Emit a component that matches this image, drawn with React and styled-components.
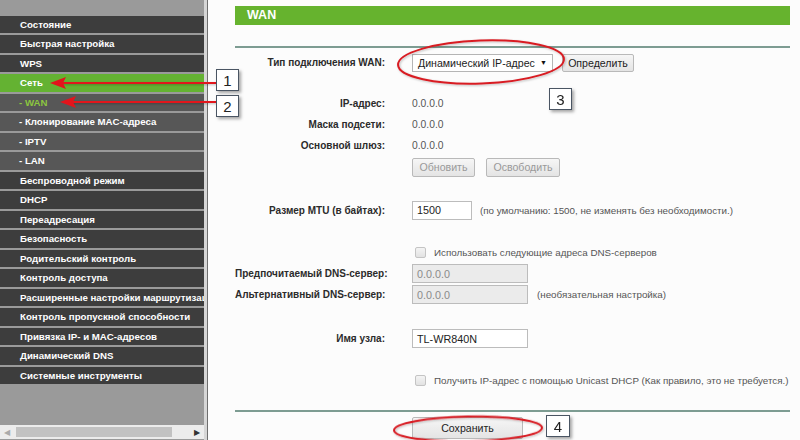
import React from "react";
import styled, { createGlobalStyle } from "styled-components";

const Global = createGlobalStyle`
  html, body { margin: 0; padding: 0; }
  body {
    width: 800px; height: 440px; overflow: hidden;
    font-family: "Liberation Sans", Arial, sans-serif;
    background: #fcfcfc;
  }
`;

const Page = styled.div`
  position: relative;
  display: flex;
  width: 800px;
  height: 440px;
  overflow: hidden;
`;

const Sidebar = styled.div`
  width: 204px;
  flex: none;
  background: #9a9a9a;
  display: flex;
  flex-direction: column;
`;

const Menu = styled.div`
  padding-top: 15.5px;
  display: flex;
  flex-direction: column;
  gap: 2px;
  flex: 1;
`;

const MenuItem = styled.div`
  height: 17.5px;
  line-height: 17.5px;
  padding-left: ${(p) => (p.$sub ? 19 : 20)}px;
  background: ${(p) => (p.$active ? "#64b232" : p.$sub ? "#575757" : "#3d3d3d")};
  color: ${(p) => (p.$current ? "#8cc63f" : "#ffffff")};
  font-size: 9.7px;
  font-weight: bold;
  white-space: nowrap;
  overflow: hidden;
`;

const HScroll = styled.div`
  height: 14px;
  margin-bottom: 1px;
  background: #ececec;
  display: flex;
  align-items: center;
  gap: 3px;
  padding: 0 3px;
  font-size: 8px;
  color: #555;
`;

const Thumb = styled.div`
  height: 10px;
  width: 156px;
  margin-left: 2px;
  background: #c2c2c2;
`;

const ScrollArrow = styled.span`
  width: 8px;
  text-align: center;
  margin-left: ${(p) => (p.$right ? "auto" : "0")};
  color: ${(p) => (p.$right ? "#333" : "#aaa")};
`;

const Divider = styled.div`
  width: 3px;
  flex: none;
  background: #d6d6d6;
  border-right: 1px solid #6e6e6e;
`;

const Content = styled.div`
  flex: 1;
  background: #fcfcfc;
  padding: 6px 10px 0 27px;
  display: flex;
  flex-direction: column;
`;

const Header = styled.div`
  height: 19px;
  background: #66b32e;
  color: #fff;
  font-weight: bold;
  font-size: 12.5px;
  line-height: 19px;
  padding-left: 12px;
`;

const Rule = styled.div`
  height: 2px;
  background: #7d9c92;
  margin-top: ${(p) => p.$mt}px;
`;

const Row = styled.div`
  display: grid;
  grid-template-columns: 150px 1fr;
  column-gap: 27px;
  align-items: center;
  height: ${(p) => p.$h}px;
  margin-top: ${(p) => p.$mt}px;
`;

const Label = styled.div`
  text-align: right;
  font-size: 10px;
  font-weight: bold;
  color: #2b2b2b;
  white-space: nowrap;
`;

const Cell = styled.div`
  display: flex;
  align-items: center;
  font-size: 10px;
  color: #555;
  white-space: nowrap;
`;

const Value = styled.span`
  font-size: 10.3px;
  color: #555;
`;

const Hint = styled.span`
  font-size: 9.8px;
  color: #555;
  margin-left: ${(p) => p.$ml}px;
`;

const Select = styled.div`
  box-sizing: border-box;
  width: 141px;
  height: 18px;
  border: 1px solid #b5b5b5;
  background: #fff;
  display: flex;
  align-items: center;
  justify-content: space-between;
  padding: 0 5px;
  font-size: 10.6px;
  color: #222;
`;

const Caret = styled.span`
  font-size: 7px;
  color: #111;
`;

const Button = styled.div`
  box-sizing: border-box;
  height: ${(p) => p.$h || 18}px;
  width: ${(p) => p.$w}px;
  margin-left: ${(p) => p.$ml || 0}px;
  border: 1px solid #b9b9b9;
  border-radius: 2px;
  background: linear-gradient(#f6f6f6, #e4e4e4);
  display: flex;
  align-items: center;
  justify-content: center;
  font-size: 10.6px;
  color: ${(p) => (p.$disabled ? "#9a9a9a" : "#222")};
`;

const Input = styled.div`
  box-sizing: border-box;
  width: ${(p) => p.$w}px;
  height: ${(p) => p.$h || 19}px;
  border: 1px solid #bcbcbc;
  background: ${(p) => (p.$disabled ? "#ebebeb" : "#fff")};
  color: ${(p) => (p.$disabled ? "#8a8a8a" : "#222")};
  font-size: 10.8px;
  display: flex;
  align-items: center;
  padding-left: 4px;
`;

const Check = styled.span`
  box-sizing: border-box;
  width: 11px;
  height: 11px;
  margin-left: 3px;
  border: 1px solid #c4c4c4;
  border-radius: 2px;
  background: linear-gradient(#f4f4f4, #e2e2e2);
  display: inline-block;
`;

const SaveRow = styled.div`
  margin-top: 5px;
  padding-left: 177px;
`;

const Overlay = styled.svg`
  position: absolute;
  left: 0;
  top: 0;
  pointer-events: none;
`;

const Badge = styled.div`
  position: absolute;
  left: ${(p) => p.$x}px;
  top: ${(p) => p.$y}px;
  width: ${(p) => p.$w || 23}px;
  height: 22px;
  box-sizing: border-box;
  background: #fff;
  border: 1px solid #4a5563;
  box-shadow: 2px 2px 3px rgba(0, 0, 0, 0.35);
  font-size: 15px;
  color: #222;
  display: flex;
  align-items: center;
  justify-content: center;
`;

const menu = [
  { t: "Состояние" },
  { t: "Быстрая настройка" },
  { t: "WPS" },
  { t: "Сеть", active: true },
  { t: "- WAN", sub: true, current: true },
  { t: "- Клонирование MAC-адреса", sub: true },
  { t: "- IPTV", sub: true },
  { t: "- LAN", sub: true },
  { t: "Беспроводной режим" },
  { t: "DHCP" },
  { t: "Переадресация" },
  { t: "Безопасность" },
  { t: "Родительский контроль" },
  { t: "Контроль доступа" },
  { t: "Расширенные настройки маршрутизации" },
  { t: "Контроль пропускной способности" },
  { t: "Привязка IP- и MAC-адресов" },
  { t: "Динамический DNS" },
  { t: "Системные инструменты" },
];

export default function App() {
  return (
    <>
      <Global />
      <Page>
        <Sidebar>
          <Menu>
            {menu.map((m) => (
              <MenuItem key={m.t} $active={m.active} $sub={m.sub} $current={m.current}>
                {m.t}
              </MenuItem>
            ))}
          </Menu>
          <HScroll>
            <ScrollArrow>◀</ScrollArrow>
            <Thumb />
            <ScrollArrow $right>▶</ScrollArrow>
          </HScroll>
        </Sidebar>
        <Divider />
        <Content>
          <Header>WAN</Header>
          <Rule $mt={21} />
          <Row $h={19} $mt={5}>
            <Label>Тип подключения WAN:</Label>
            <Cell>
              <Select>
                Динамический IP-адрес <Caret>▼</Caret>
              </Select>
              <Button $w={72} $ml={9}>Определить</Button>
            </Cell>
          </Row>
          <Row $h={21} $mt={21}>
            <Label>IP-адрес:</Label>
            <Cell><Value>0.0.0.0</Value></Cell>
          </Row>
          <Row $h={21} $mt={0}>
            <Label>Маска подсети:</Label>
            <Cell><Value>0.0.0.0</Value></Cell>
          </Row>
          <Row $h={21} $mt={0}>
            <Label>Основной шлюз:</Label>
            <Cell><Value>0.0.0.0</Value></Cell>
          </Row>
          <Row $h={20} $mt={1}>
            <Label />
            <Cell>
              <Button $w={63} $h={19} $disabled>Обновить</Button>
              <Button $w={74} $h={19} $ml={11} $disabled>Освободить</Button>
            </Cell>
          </Row>
          <Row $h={20} $mt={23}>
            <Label>Размер MTU (в байтах):</Label>
            <Cell>
              <Input $w={60}>1500</Input>
              <Hint $ml={8}>(по умолчанию: 1500, не изменять без необходимости.)</Hint>
            </Cell>
          </Row>
          <Row $h={20} $mt={22}>
            <Label />
            <Cell>
              <Check />
              <Hint $ml={8}>Использовать следующие адреса DNS-серверов</Hint>
            </Cell>
          </Row>
          <Row $h={19} $mt={2}>
            <Label>Предпочитаемый DNS-сервер:</Label>
            <Cell>
              <Input $w={116} $disabled>0.0.0.0</Input>
            </Cell>
          </Row>
          <Row $h={19} $mt={2}>
            <Label>Альтернативный DNS-сервер:</Label>
            <Cell>
              <Input $w={116} $disabled>0.0.0.0</Input>
              <Hint $ml={9}>(необязательная настройка)</Hint>
            </Cell>
          </Row>
          <Row $h={19} $mt={25}>
            <Label>Имя узла:</Label>
            <Cell>
              <Input $w={116}>TL-WR840N</Input>
            </Cell>
          </Row>
          <Row $h={20} $mt={22}>
            <Label />
            <Cell>
              <Check />
              <Hint $ml={8}>Получить IP-адрес с помощью Unicast DHCP (Как правило, это не требуется.)</Hint>
            </Cell>
          </Row>
          <Rule $mt={20} />
          <SaveRow>
            <Button $w={111} $h={22}>Сохранить</Button>
          </SaveRow>
        </Content>

        <Overlay width="800" height="440" viewBox="0 0 800 440">
          <defs>
            <filter id="sh" x="-10%" y="-30%" width="120%" height="160%">
              <feDropShadow dx="1" dy="1" stdDeviation="1" floodColor="#000" floodOpacity="0.25" />
            </filter>
          </defs>
          <g stroke="#e2141c" strokeWidth="2.2" fill="none" filter="url(#sh)">
            <line x1="216" y1="83" x2="60" y2="83" />
            <line x1="216" y1="102" x2="70" y2="102" />
          </g>
          <g fill="#e2141c">
            <polygon points="50,83 66,77 63,83 66,89" />
            <polygon points="60,102 76,96 73,102 76,108" />
          </g>
          <g fill="none" stroke="#d81c24" strokeWidth="2" filter="url(#sh)">
            <ellipse cx="481" cy="62" rx="83" ry="21.5" transform="rotate(-2 481 62)" />
            <ellipse cx="468" cy="429" rx="74" ry="12.5" transform="rotate(-1 468 429)" />
          </g>
        </Overlay>
        <Badge $x={216} $y={69}>1</Badge>
        <Badge $x={216} $y={95}>2</Badge>
        <Badge $x={549} $y={88}>3</Badge>
        <Badge $x={546} $y={415} $w={24}>4</Badge>
      </Page>
    </>
  );
}
